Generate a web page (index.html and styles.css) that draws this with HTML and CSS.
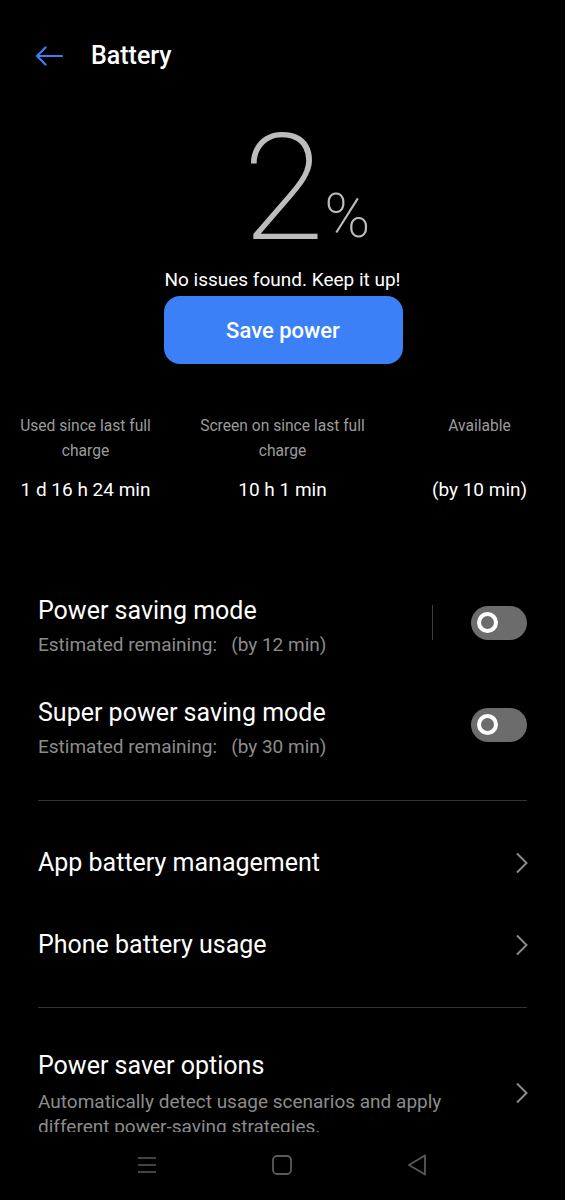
FILE: index.html
```html
<!DOCTYPE html>
<html lang="en">
<head>
<meta charset="utf-8">
<title>Battery</title>
<link rel="stylesheet" href="styles.css">
</head>
<body>
<div class="screen">
  <div class="content">
    <header class="header">
      <svg class="back" width="28" height="20" viewBox="0 0 28 20" aria-hidden="true">
        <path d="M27 10H2M10.5 1.5L2 10l8.5 8.5" fill="none" stroke="#3d7ef5" stroke-width="2.2" stroke-linecap="round" stroke-linejoin="round"/>
      </svg>
      <h1 class="title">Battery</h1>
    </header>

    <section class="hero">
      <div class="level"><span class="num">2</span><span class="pct">%</span></div>
      <p class="message">No issues found. Keep it up!</p>
      <button class="save">Save power</button>
    </section>

    <section class="stats">
      <div class="stat">
        <div class="label">Used since last full charge</div>
        <div class="value">1 d 16 h 24 min</div>
      </div>
      <div class="stat">
        <div class="label">Screen on since last full charge</div>
        <div class="value">10 h 1 min</div>
      </div>
      <div class="stat">
        <div class="label">Available</div>
        <div class="value">(by 10 min)</div>
      </div>
    </section>

    <section class="list modes">
      <div class="row row-two">
        <div class="text">
          <div class="row-title">Power saving mode</div>
          <div class="row-sub">Estimated remaining:&nbsp;&nbsp; (by 12 min)</div>
        </div>
        <div class="vsep"></div>
        <div class="toggle"><span class="knob"></span></div>
      </div>
      <div class="row row-two">
        <div class="text">
          <div class="row-title">Super power saving mode</div>
          <div class="row-sub">Estimated remaining:&nbsp;&nbsp; (by 30 min)</div>
        </div>
        <div class="toggle"><span class="knob"></span></div>
      </div>
    </section>

    <div class="divider"></div>

    <section class="list links">
      <div class="row row-one">
        <div class="row-title">App battery management</div>
        <svg class="chev" width="14" height="22" viewBox="0 0 14 22" aria-hidden="true"><path d="M2 1.5l9.5 9.5L2 20.5" fill="none" stroke="#8a8a8a" stroke-width="2"/></svg>
      </div>
      <div class="row row-one">
        <div class="row-title">Phone battery usage</div>
        <svg class="chev" width="14" height="22" viewBox="0 0 14 22" aria-hidden="true"><path d="M2 1.5l9.5 9.5L2 20.5" fill="none" stroke="#8a8a8a" stroke-width="2"/></svg>
      </div>
    </section>

    <div class="divider divider-2"></div>

    <section class="list options">
      <div class="row row-opt">
        <div class="text">
          <div class="row-title">Power saver options</div>
          <div class="row-sub multi">Automatically detect usage scenarios and apply different power-saving strategies.</div>
        </div>
        <svg class="chev" width="14" height="22" viewBox="0 0 14 22" aria-hidden="true"><path d="M2 1.5l9.5 9.5L2 20.5" fill="none" stroke="#8a8a8a" stroke-width="2"/></svg>
      </div>
    </section>
  </div>

  <nav class="navbar">
    <svg width="22" height="20" viewBox="0 0 22 20" aria-hidden="true">
      <path d="M2 3h18M2 10h18M2 17h18" stroke="#5a5a5a" stroke-width="1.6"/>
    </svg>
    <svg width="22" height="22" viewBox="0 0 22 22" aria-hidden="true">
      <rect x="2" y="2" width="18" height="18" rx="4" fill="none" stroke="#5a5a5a" stroke-width="1.8"/>
    </svg>
    <svg width="22" height="24" viewBox="0 0 22 24" aria-hidden="true">
      <path d="M19 2.5L3 12l16 9.5z" fill="none" stroke="#5a5a5a" stroke-width="1.8" stroke-linejoin="round"/>
    </svg>
  </nav>
</div>
</body>
</html>
```

FILE: styles.css
```css
* { box-sizing: border-box; }

html, body {
  margin: 0;
  padding: 0;
  background: #000;
}

body {
  font-family: Roboto, "Noto Sans", "Liberation Sans", sans-serif;
  color: #fff;
  width: 565px;
}

.screen {
  width: 565px;
  height: 1200px;
  display: flex;
  flex-direction: column;
  overflow: hidden;
}

.content {
  height: 1132px;
  overflow: hidden;
  flex: none;
}

/* header */
.header {
  height: 115px;
  display: flex;
  align-items: center;
  padding: 0 0 4px 35px;
}

.back { display: block; flex: none; }

.title {
  margin: 0 0 0 28px;
  font-size: 25px;
  font-weight: 500;
  line-height: 30px;
}

/* hero */
.hero {
  display: flex;
  flex-direction: column;
  align-items: center;
}

.level {
  height: 148px;
  display: flex;
  align-items: baseline;
  justify-content: center;
  color: #bdbdbd;
  padding-left: 48px;
  width: 100%;
}

.num {
  font-size: 148px;
  line-height: 148px;
  font-weight: 200;
}

.pct {
  font-size: 62px;
  line-height: 62px;
  font-weight: 200;
  margin-left: 0;
  position: relative;
  top: -2px;
}

.message {
  margin: 5px 0 0;
  font-size: 19px;
  line-height: 24px;
}

.save {
  margin-top: 4px;
  width: 239px;
  height: 68px;
  border: none;
  border-radius: 16px;
  background: #3b80f6;
  color: #fff;
  font-family: inherit;
  font-size: 22px;
  font-weight: 500;
  margin-left: 1px;
}

/* stats */
.stats {
  margin: 50px -13px 0;
  display: grid;
  grid-template-columns: repeat(3, 1fr);
}

.stat {
  display: flex;
  flex-direction: column;
  align-items: center;
  text-align: center;
}

.label {
  height: 64px;
  font-size: 15.6px;
  line-height: 25px;
  color: #9b9b9b;
  padding: 0 12px;
}

.value {
  font-size: 19px;
  line-height: 24px;
}

/* lists */
.list {
  padding: 0 38px;
}

.modes { margin-top: 78px; }

.row {
  display: flex;
  align-items: center;
}

.row .text { flex: 1; min-width: 0; }

.row-title {
  font-size: 25px;
  line-height: 30px;
  flex: 1;
}

.row-sub {
  margin-top: 7px;
  font-size: 19px;
  line-height: 24px;
  color: #8c8c8c;
}

.row-two {
  padding: 16px 0 25px;
}

.vsep {
  width: 1px;
  height: 35px;
  background: #3e3e3e;
  margin-right: 38px;
  margin-top: -8px;
}

.toggle {
  width: 56px;
  height: 34px;
  border-radius: 17px;
  background: #6c6c6c;
  display: flex;
  align-items: center;
  padding-left: 6px;
  margin-top: -8px;
}

.knob {
  width: 21px;
  height: 21px;
  border-radius: 50%;
  border: 4.5px solid #fff;
  background: #6c6c6c;
}

.divider {
  height: 1px;
  background: #343434;
  margin: 16px 38px 0;
}

.links { margin-top: 21px; }

.row-one {
  padding: 26px 0;
}

.chev { display: block; flex: none; margin-right: -2px; }

.divider-2 { margin-top: 21px; }

.options { margin-top: 43px; }

.row-opt .row-sub.multi {
  margin-top: 8px;
  line-height: 25px;
  padding-right: 40px;
}

.row-opt .chev { margin-top: -4px; }

/* navbar */
.navbar {
  flex: 1;
  display: flex;
  align-items: center;
  justify-content: space-between;
  padding: 0 137px 0 136px;
  margin-top: -2px;
}

.navbar svg { display: block; }
```
